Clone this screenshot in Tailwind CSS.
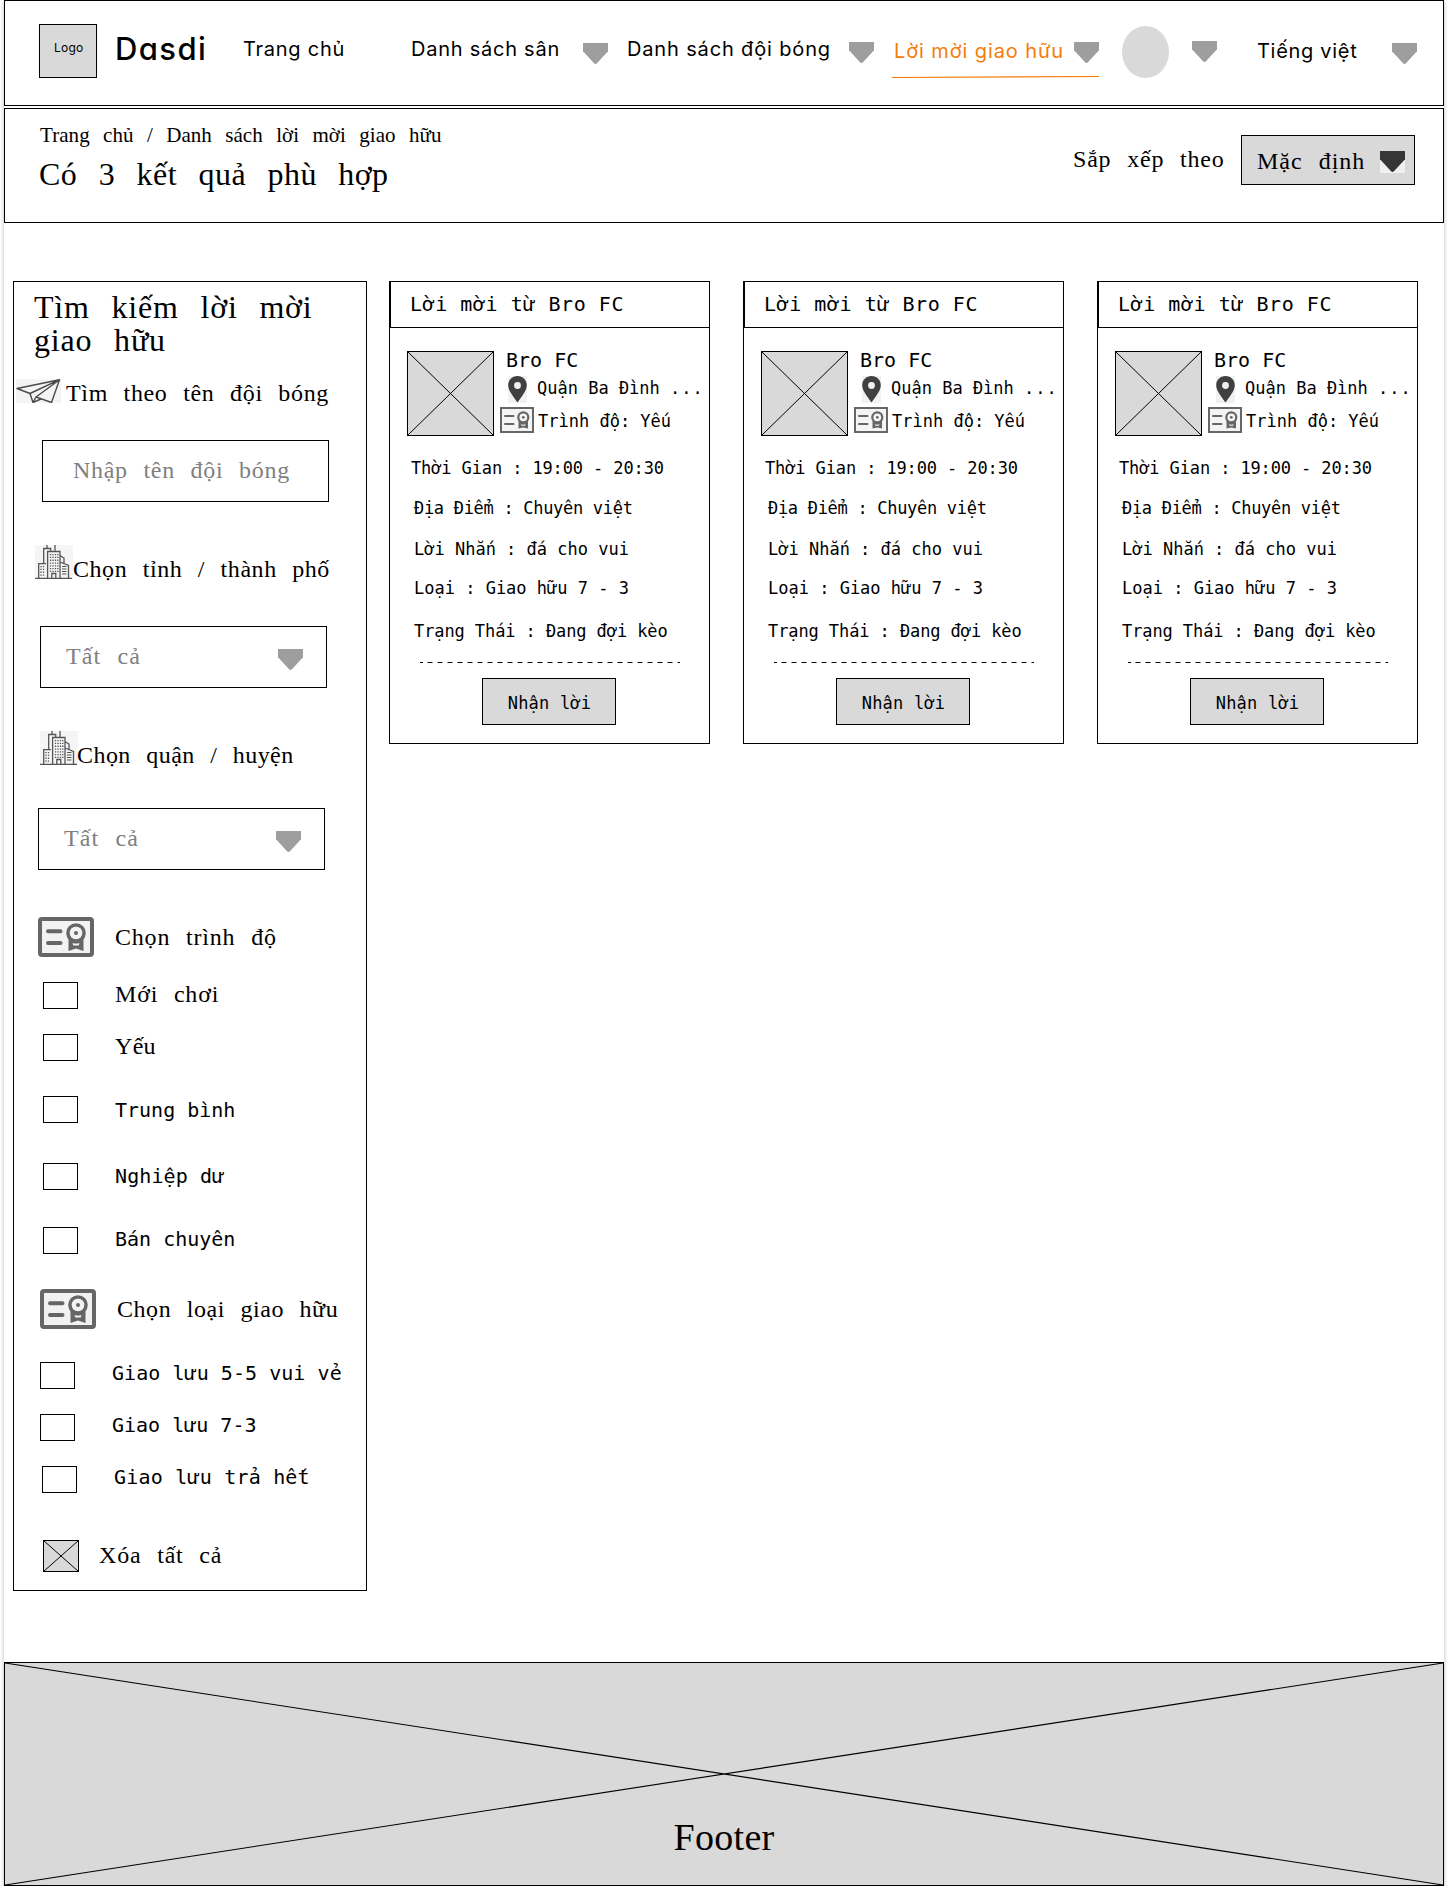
<!DOCTYPE html>
<html lang="vi">
<head>
<meta charset="utf-8">
<title>Dasdi - Lời mời giao hữu</title>
<script src="https://cdn.jsdelivr.net/npm/@tailwindcss/browser@4"></script>
</head>
<body class="bg-white text-black overflow-x-hidden">
<svg class="hidden">
  <symbol id="arrow" viewBox="0 0 25 21"><path d="M0 0h25v8.2L14.2 20q-1.7 1.8-3.4 0L0 8.200z" fill="currentColor"/></symbol>
  <symbol id="plane" viewBox="0 0 45 24"><rect width="45" height="24" fill="#f4f4f4"/><g fill="none" stroke="#4b4b4b" stroke-width="1.4" stroke-linejoin="round"><path d="M43.500 .7L1 9.500l13 5zM43.500 .7L14 14.500l3 9 3-5.500zM43.500 .7L20 18l15.500 5.500zM17 23.500l8-3.500"/></g></symbol>
  <symbol id="city" viewBox="0 0 38 34"><rect width="38" height="34" fill="#f5f5f5"/><g fill="none" stroke="#555" stroke-width="1.300"><path d="M0 33.400h37M3.700 33V18.600H11M8.700 18V3.500h7v2.500M12 3.500V0M20 6V0M12.600 33V6.500H25V33M25 10.500l4 2.500v5M25 17l8.500 3.500V33M16.800 33v-4.500h4V33"/></g><g fill="none" stroke="#555" stroke-width="1.300" stroke-dasharray="1.300 1.500"><path d="M15.500 9v18M18 9v18M20.500 9v18M22.800 9v18M6 21v10M8.500 21v10"/></g><path d="M27 21.500h4.500M27 24h4.500M27 26.500h4.500M27 29h4.500" stroke="#555" stroke-width="1.200"/></symbol>
  <symbol id="cert" viewBox="0 0 56 40"><rect x="2" y="2" width="52" height="36" rx="2" fill="#f2f2f2" stroke="#666" stroke-width="4"/><g fill="none" stroke="#666" stroke-width="4" stroke-linecap="round"><path d="M10 14.200h12.500M10 26h12.500"/><circle cx="38" cy="16" r="8" stroke-width="3.600"/></g><path d="M30.500 21.500h15V34L38 31.500 30.500 34z" fill="#666"/><path d="M34.500 26q3.500 1.200 7 0l-.8 2.400h-5.400z" fill="#f2f2f2"/><circle cx="38" cy="16" r="6.200" fill="#f2f2f2"/><circle cx="38" cy="16" r="2" fill="#666"/></symbol>
  <symbol id="certsm" viewBox="0 0 34 26"><rect x="1" y="1" width="32" height="24" fill="#f4f4f4" stroke="#666" stroke-width="2"/><path d="M5 9h8.500M5 17h8.500" stroke="#666" stroke-width="2" stroke-linecap="round"/><path d="M18.500 14h9.500v7.500l-4.700-1-4.800 1z" fill="#666"/><path d="M21 17.300q2.300.8 4.600 0l-.6 1.500h-3.500z" fill="#f4f4f4"/><circle cx="23.300" cy="10.300" r="5" fill="#f4f4f4" stroke="#666" stroke-width="2.200"/><circle cx="23.300" cy="10.300" r="1.400" fill="#666"/></symbol>
  <symbol id="pin" viewBox="0 0 19 27"><rect width="19" height="27" fill="#f1f1f1"/><path d="M9.500 0C4.200 0 .2 4 .2 9.200c0 5.600 5 10.800 9.300 17.300 4.300-6.500 9.300-11.700 9.300-17.300C18.800 4 14.800 0 9.500 0z" fill="#404040"/><circle cx="9.500" cy="9.500" r="3.400" fill="#f1f1f1"/></symbol>
</svg>

<div class="ml-1 w-[1440px] h-[1886px] flex flex-col shadow-[0_2px_4px_rgba(0,0,0,0.3)]">

  <header class="h-[106px] shrink-0 border border-black flex items-start whitespace-nowrap font-['Inter',sans-serif] text-[20px] leading-none [&>*]:shrink-0">
    <div class="ml-[34px] mt-[23px] w-[58px] h-[54px] border border-black bg-[#d9d9d9] pt-[17px] pl-[14px] font-['Inter',sans-serif] text-[12px] leading-none tracking-[0.2px]">Logo</div>
    <div class="ml-[18px] mt-[32px] w-[93px] text-[31px] leading-none font-medium tracking-[1.4px] [font-feature-settings:'cv11']">Dasdi</div>
    <a class="ml-[35px] mt-[38px] w-[103px] tracking-[0.75px]">Trang chủ</a>
    <a class="ml-[65px] mt-[38px] w-[150px] tracking-[0.75px]">Danh sách sân</a>
    <svg class="ml-[22px] mt-[42px] w-[25px] h-[21px] text-[#9e9e9e]"><use href="#arrow"/></svg>
    <a class="ml-[19px] mt-[38px] w-[206px] tracking-[0.85px]">Danh sách đội bóng</a>
    <svg class="ml-[16px] mt-[41px] w-[25px] h-[21px] text-[#9e9e9e]"><use href="#arrow"/></svg>
    <div class="ml-[18px] mt-[40px] w-[207px] text-[#f57c0a]">
      <div class="flex items-start"><a class="pl-[2px] w-[182px] tracking-[0.9px]">Lời mời giao hữu</a><svg class="mt-px w-[25px] h-[21px] text-[#9e9e9e]"><use href="#arrow"/></svg></div>
      <svg class="mt-[13px] w-[207px] h-[2px]" viewBox="0 0 207 2"><path d="M0 1.500L207 .5" stroke="#f57c0a" stroke-width="1.100"/></svg>
    </div>
    <div class="ml-[23px] mt-[25px] w-[47px] h-[52px] rounded-[50%] bg-[#d9d9d9]"></div>
    <svg class="ml-[23px] mt-[40px] w-[25px] h-[21px] text-[#9e9e9e]"><use href="#arrow"/></svg>
    <a class="ml-[40px] mt-[40px] w-[101px] tracking-[0.7px]">Tiếng việt</a>
    <svg class="ml-[34px] mt-[42px] w-[25px] h-[21px] text-[#9e9e9e]"><use href="#arrow"/></svg>
  </header>

  <section class="mt-[2px] h-[115px] shrink-0 border border-black flex items-start justify-between font-['Liberation_Serif',serif] whitespace-nowrap">
    <div class="pl-[35px] pt-[16px]">
      <div class="text-[21px] leading-none [word-spacing:8px] tracking-[0.07px]">Trang chủ / Danh sách lời mời giao hữu</div>
      <h1 class="-ml-px mt-[12px] text-[32px] leading-none [word-spacing:13px] tracking-[0.45px]">Có 3 kết quả phù hợp</h1>
    </div>
    <div class="flex items-start mt-[26px] mr-[28px] text-[24px] leading-none [word-spacing:9px]">
      <div class="mt-[12px] w-[168px] tracking-[0.8px]">Sắp xếp theo</div>
      <div class="w-[174px] h-[50px] border border-black bg-[#d9d9d9] flex items-start pl-[15px]">
        <div class="mt-[13px] w-[123px] tracking-[1px]">Mặc định</div>
        <svg class="mt-[15px] w-[25px] h-[22px] bg-[#f0f0f0] text-[#363636]" viewBox="0 0 25 22"><use href="#arrow" width="25" height="21"/></svg>
      </div>
    </div>
  </section>

  <main class="mt-[58px] ml-[9px] flex items-start gap-[22px]">
    <aside class="w-[354px] h-[1310px] shrink-0 border border-black whitespace-nowrap font-['Liberation_Serif',serif] text-[24px] leading-none [word-spacing:9px]">
      <h2 class="mt-[9px] pl-[20px] text-[32px] leading-[33px] [word-spacing:13px] tracking-[0.8px]">Tìm kiếm lời mời<br>giao hữu</h2>
      <div class="mt-[22px] pl-[2px] h-[24px] flex items-start gap-[5px]"><svg class="w-[45px] h-[24px] shrink-0"><use href="#plane"/></svg><div class="mt-[2px] tracking-[0.65px]">Tìm theo tên đội bóng</div></div>
      <div class="mt-[37px] ml-[28px] w-[287px] h-[62px] border border-black pl-[30px] pt-[17px] text-[#808080] tracking-[0.7px]">Nhập tên đội bóng</div>

      <div class="mt-[43px] pl-[21px] h-[34px] flex items-start"><svg class="w-[38px] h-[34px] shrink-0"><use href="#city"/></svg><div class="mt-[12px] tracking-[0.55px]">Chọn tỉnh / thành phố</div></div>
      <div class="mt-[47px] ml-[26px] w-[287px] h-[62px] border border-black pl-[25px] pr-[23px] flex items-start justify-between text-[#808080]"><div class="mt-[17px] tracking-[1.1px]">Tất cả</div><svg class="mt-[22px] w-[25px] h-[21px] text-[#9e9e9e]"><use href="#arrow"/></svg></div>

      <div class="mt-[43px] pl-[26px] h-[34px] flex items-start"><svg class="w-[38px] h-[34px] shrink-0"><use href="#city"/></svg><div class="-ml-px mt-[12px] tracking-[0.45px]">Chọn quận / huyện</div></div>
      <div class="mt-[43px] ml-[24px] w-[287px] h-[62px] border border-black pl-[25px] pr-[23px] flex items-start justify-between text-[#808080]"><div class="mt-[17px] tracking-[1.1px]">Tất cả</div><svg class="mt-[22px] w-[25px] h-[21px] text-[#9e9e9e]"><use href="#arrow"/></svg></div>

      <div class="mt-[47px] pl-[24px] h-[40px] flex items-start gap-[21px]"><svg class="w-[56px] h-[40px] shrink-0"><use href="#cert"/></svg><div class="mt-[8px] tracking-[0.8px]">Chọn trình độ</div></div>
      <div class="mt-[25px] pl-[29px] h-[27px] flex items-start gap-[37px]"><i class="w-[35px] h-[27px] shrink-0 border border-black"></i><div class="tracking-[0.8px]">Mới chơi</div></div>
      <div class="mt-[25px] pl-[29px] h-[27px] flex items-start gap-[37px]"><i class="w-[35px] h-[27px] shrink-0 border border-black"></i><div class="tracking-[0.3px]">Yếu</div></div>
      <div class="font-['DejaVu_Sans_Mono',monospace] text-[20px] leading-none [word-spacing:0px]">
        <div class="mt-[35px] pl-[29px] h-[27px] flex items-start gap-[37px]"><i class="w-[35px] h-[27px] shrink-0 border border-black"></i><div class="mt-[4px]">Trung bình</div></div>
        <div class="mt-[40px] pl-[29px] h-[27px] flex items-start gap-[37px]"><i class="w-[35px] h-[27px] shrink-0 border border-black"></i><div class="mt-[3px] tracking-[0.1px]">Nghiệp dư</div></div>
        <div class="mt-[37px] pl-[29px] h-[27px] flex items-start gap-[37px]"><i class="w-[35px] h-[27px] shrink-0 border border-black"></i><div class="mt-[2px]">Bán chuyên</div></div>
      </div>

      <div class="mt-[35px] pl-[26px] h-[40px] flex items-start gap-[21px]"><svg class="w-[56px] h-[40px] shrink-0"><use href="#cert"/></svg><div class="mt-[8px] tracking-[0.55px]">Chọn loại giao hữu</div></div>
      <div class="font-['DejaVu_Sans_Mono',monospace] text-[20px] leading-none [word-spacing:0px]">
        <div class="mt-[33px] pl-[26px] h-[27px] flex items-start gap-[37px]"><i class="w-[35px] h-[27px] shrink-0 border border-black"></i><div class="mt-px tracking-[0.05px]">Giao lưu 5-5 vui vẻ</div></div>
        <div class="mt-[25px] pl-[26px] h-[27px] flex items-start gap-[37px]"><i class="w-[35px] h-[27px] shrink-0 border border-black"></i><div class="mt-px">Giao lưu 7-3</div></div>
        <div class="mt-[25px] pl-[28px] h-[27px] flex items-start gap-[37px]"><i class="w-[35px] h-[27px] shrink-0 border border-black"></i><div class="mt-px tracking-[0.2px]">Giao lưu trả hết</div></div>
      </div>
      <div class="mt-[47px] pl-[29px] h-[32px] flex items-start gap-[20px]"><svg class="w-[36px] h-[32px] shrink-0" viewBox="0 0 36 32"><rect x=".5" y=".5" width="35" height="31" fill="#d9d9d9" stroke="#000"/><path d="M.5 .5l35 31M35.500 .5l-35 31" stroke="#000"/></svg><div class="mt-[3px] tracking-[0.8px]">Xóa tất cả</div></div>
    </aside>

    <div class="flex items-start gap-[33px]">
      <template id="card">
        <article class="w-[321px] h-[463px] shrink-0 border border-black whitespace-nowrap font-['DejaVu_Sans_Mono',monospace] text-[17px] leading-none">
          <h3 class="h-[46px] border-l border-b border-black pl-[19px] pt-[12px] text-[20px] leading-none tracking-[0.55px]">Lời mời từ Bro FC</h3>
          <div class="mt-[23px] pl-[17px] h-[85px] flex items-start gap-[6px]">
            <svg class="w-[87px] h-[85px] shrink-0" viewBox="0 0 87 85"><rect x=".5" y=".5" width="86" height="84" fill="#d9d9d9" stroke="#000"/><path d="M.5 .5l86 84M86.500 .5l-86 84" stroke="#000"/></svg>
            <div>
              <div class="-mt-px pl-[6px] text-[20px] leading-none">Bro FC</div>
              <div class="mt-[6px] pl-[8px] h-[27px] flex items-start gap-[10px]"><svg class="w-[19px] h-[27px] shrink-0"><use href="#pin"/></svg><div class="mt-[4px]">Quận Ba Đình <span class="tracking-[1px]">...</span></div></div>
              <div class="mt-[4px] h-[26px] flex items-start gap-[4px]"><svg class="w-[34px] h-[26px] shrink-0"><use href="#certsm"/></svg><div class="mt-[6px]">Trình độ: Yếu</div></div>
            </div>
          </div>
          <p class="mt-[24px] pl-[21px] tracking-[-0.12px]">Thời Gian : 19:00 - 20:30</p>
          <p class="mt-[23px] pl-[24px] tracking-[-0.3px]">Địa Điểm : Chuyên việt</p>
          <p class="mt-[24px] pl-[24px]">Lời Nhắn : đá cho vui</p>
          <p class="mt-[22px] pl-[24px]">Loại : Giao hữu 7 - 3</p>
          <p class="mt-[26px] pl-[24px] tracking-[-0.09px]">Trạng Thái : Đang đợi kèo</p>
          <svg class="mt-[22px] ml-[30px] w-[260px] h-px block" viewBox="0 0 260 1"><path d="M0 .5h3M7.500 .5h250M257.500 .5h2.500" stroke="#000" stroke-dasharray="5 5"/></svg>
          <button class="mt-[15px] ml-[92px] w-[134px] h-[47px] block border border-black bg-[#d9d9d9] pt-[4px] pl-px leading-none tracking-[0.2px]">Nhận lời</button>
        </article>
      </template>
    </div>
  </main>

  <footer class="relative mt-[71px] h-[224px] shrink-0 border border-black bg-[#d9d9d9] font-['Liberation_Serif',serif] text-[38px] leading-none text-center pt-[155px] tracking-[0.3px]">
    <svg class="absolute inset-0 w-full h-full" viewBox="0 0 1438 222" preserveAspectRatio="none"><path d="M0 0L1438 222M1438 0L0 222" stroke="#000" stroke-width="1.100"/></svg>
    <span class="relative">Footer</span>
  </footer>
</div>
<script>
  const card = document.getElementById('card');
  for (let i = 0; i < 3; i++) card.parentNode.appendChild(card.content.cloneNode(true));
</script>
</body>
</html>
